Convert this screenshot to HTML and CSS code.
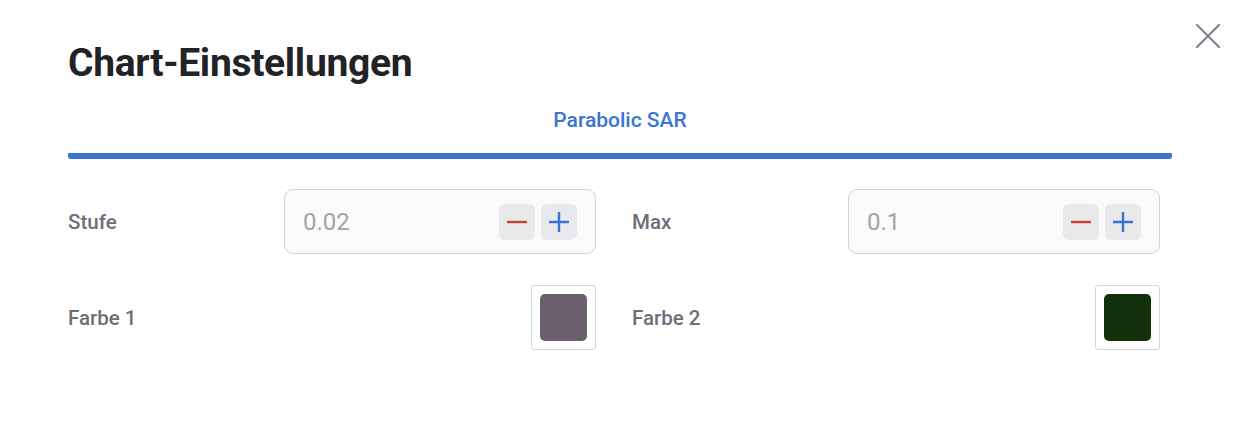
FILE: index.html
```html
<!DOCTYPE html>
<html lang="de">
<head>
<meta charset="utf-8">
<title>Chart-Einstellungen</title>
<link rel="stylesheet" href="styles.css">
</head>
<body>
<div class="modal">
  <button class="close" aria-label="Schließen">
    <svg width="26" height="26" viewBox="0 0 26 26"><path d="M2 2 L24 24 M24 2 L2 24" stroke="#7b808a" stroke-width="2" stroke-linecap="square" fill="none"/></svg>
  </button>
  <h1 class="title">Chart-Einstellungen</h1>
  <div class="tabs">
    <div class="tab active">Parabolic SAR</div>
  </div>
  <div class="form">
    <div class="field">
      <span class="label">Stufe</span>
      <div class="stepper">
        <span class="value">0.02</span>
        <div class="btns">
          <button class="step minus" aria-label="minus"><svg width="22" height="22" viewBox="0 0 22 22"><path d="M1 11 H21" stroke="#c9442b" stroke-width="2.4"/></svg></button>
          <button class="step plus" aria-label="plus"><svg width="22" height="22" viewBox="0 0 22 22"><path d="M1 11 H21 M11 1 V21" stroke="#3c72d5" stroke-width="2.4"/></svg></button>
        </div>
      </div>
    </div>
    <div class="field">
      <span class="label">Max</span>
      <div class="stepper">
        <span class="value">0.1</span>
        <div class="btns">
          <button class="step minus" aria-label="minus"><svg width="22" height="22" viewBox="0 0 22 22"><path d="M1 11 H21" stroke="#c9442b" stroke-width="2.4"/></svg></button>
          <button class="step plus" aria-label="plus"><svg width="22" height="22" viewBox="0 0 22 22"><path d="M1 11 H21 M11 1 V21" stroke="#3c72d5" stroke-width="2.4"/></svg></button>
        </div>
      </div>
    </div>
    <div class="field">
      <span class="label">Farbe 1</span>
      <div class="swatch"><span class="chip chip-1"></span></div>
    </div>
    <div class="field">
      <span class="label">Farbe 2</span>
      <div class="swatch"><span class="chip chip-2"></span></div>
    </div>
  </div>
</div>
</body>
</html>
```
FILE: styles.css
```css
* { box-sizing: border-box; }
html, body { margin: 0; padding: 0; background: #ffffff; }
body {
  font-family: Roboto, "Liberation Sans", Arial, sans-serif;
  width: 1244px;
  height: 434px;
  overflow: hidden;
}
.modal {
  position: relative;
  padding: 39px 72px 0 68px;
}
.close {
  position: absolute;
  top: 23px;
  right: 23px;
  width: 26px;
  height: 26px;
  padding: 0;
  border: 0;
  background: transparent;
  display: flex;
}
.title {
  margin: 0;
  font-size: 39px;
  font-weight: 700;
  color: #212327;
  line-height: 48px;
  letter-spacing: -0.3px;
}
.tabs {
  margin-top: 20px;
  display: flex;
}
.tab {
  flex: 1;
  text-align: center;
  font-size: 21px;
  font-weight: 500;
  color: #3d72d6;
  padding-bottom: 20px;
  border-bottom: 6px solid #3d72d6;
  border-radius: 3px;
  line-height: 26px;
}
.form {
  margin-top: 30px;
  width: 1092px;
  display: grid;
  grid-template-columns: 528px 528px;
  column-gap: 36px;
  row-gap: 31px;
}
.field {
  display: flex;
  align-items: center;
  justify-content: space-between;
}
.label {
  font-size: 20.5px;
  font-weight: 500;
  color: #6b6f78;
}
.stepper {
  width: 312px;
  height: 65px;
  border: 1px solid #d3d4d7;
  border-radius: 9px;
  background: #fafafa;
  display: flex;
  align-items: center;
  justify-content: space-between;
  padding: 0 18px 0 18px;
}
.value {
  font-size: 24px;
  color: #9fa3aa;
}
.btns {
  display: flex;
  gap: 6px;
}
.step {
  width: 36px;
  height: 36px;
  border: 0;
  border-radius: 6px;
  background: #e8e9eb;
  padding: 0;
  display: flex;
  align-items: center;
  justify-content: center;
}
.swatch {
  width: 65px;
  height: 65px;
  border: 1px solid #d3d4d7;
  border-radius: 3px;
  padding: 8px;
  display: flex;
}
.chip {
  flex: 1;
  border-radius: 5px;
}
.chip-1 { background: #6b5f6e; }
.chip-2 { background: #12310b; }
```
